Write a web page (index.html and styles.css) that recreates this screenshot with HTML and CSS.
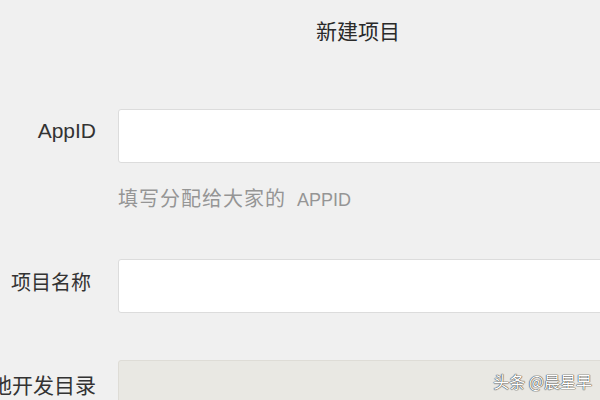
FILE: index.html
```html
<!DOCTYPE html>
<html lang="zh-CN">
<head>
<meta charset="utf-8">
<title>新建项目</title>
<link rel="stylesheet" href="styles.css">
</head>
<body>
<div class="page">
  <h1 class="title">新建项目</h1>
  <div class="form">
    <div class="row">
      <label class="label label-latin">AppID</label>
      <div class="field"><div class="input"></div></div>
    </div>
    <div class="hint"><span class="hint-cjk">填写分配给大家的</span> <span class="hint-latin">APPID</span></div>
    <div class="row row-name">
      <label class="label label-name">项目名称</label>
      <div class="field"><div class="input"></div></div>
    </div>
    <div class="row row-dir">
      <label class="label label-dir">本地开发目录</label>
      <div class="field"><div class="input input-disabled"></div></div>
    </div>
  </div>
  <div class="watermark">头条 @晨星早</div>
</div>
</body>
</html>
```
FILE: styles.css
```css
html, body {
  margin: 0;
  padding: 0;
  background: #f0f0f0;
  overflow: hidden;
}
body {
  width: 600px;
  height: 400px;
  font-family: "Liberation Sans", "Noto Sans CJK SC", sans-serif;
  color: #333;
}
.page {
  position: relative;
  width: 600px;
  height: 400px;
  overflow: hidden;
}
.title {
  margin: 0;
  padding: 17px 0 0 116px;
  height: 30px;
  line-height: 30px;
  font-size: 21px;
  font-weight: normal;
  text-align: center;
  color: #2a2a2a;
}
.form {
  margin-top: 62px;
}
.row {
  display: grid;
  grid-template-columns: 96px 700px;
  column-gap: 22px;
  align-items: start;
}
.label {
  display: block;
  text-align: right;
  white-space: nowrap;
  direction: rtl;
  font-size: 20px;
  line-height: 30px;
  padding-top: 8px;
  color: #333;
}
.label-latin {
  font-size: 21px;
  padding-top: 7px;
}
.label-name {
  padding-right: 5px;
  padding-top: 9px;
  font-size: 20px;
}
.label-dir {
  font-size: 21px;
  padding-top: 11px;
}
.input {
  box-sizing: border-box;
  height: 54px;
  background: #fff;
  border: 1px solid #dcdcdc;
  border-radius: 3px;
}
.input-disabled {
  background: #e9e8e3;
  border-color: #dedcd6;
  height: 60px;
}
.hint {
  margin: 24px 0 0 118px;
  font-size: 18px;
  line-height: 24px;
  color: #959595;
  white-space: nowrap;
}
.hint-cjk {
  font-size: 20px;
  letter-spacing: 1px;
}
.hint-latin {
  margin-left: 6px;
}
.row-name {
  margin-top: 47px;
}
.row-dir {
  margin-top: 47px;
}
.watermark {
  position: absolute;
  right: 8px;
  top: 370px;
  font-size: 16px;
  line-height: 22px;
  color: #fff;
  text-shadow: 0 0 1px #444, 0 0 1px #444, 0 0 1px #444;
  font-family: "Noto Sans CJK SC", sans-serif;
}
```
